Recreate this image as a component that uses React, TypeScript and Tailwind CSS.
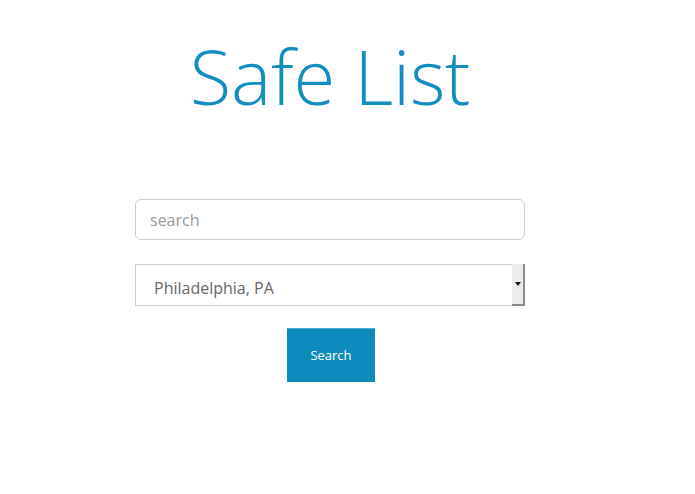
import React from 'react';

const App: React.FC = () => {
  return (
    <div className="min-h-[494px] bg-white font-['Open_Sans',sans-serif]">
      <div className="w-[390px] ml-[135px] pt-[38px] flex flex-col items-center">
        {/* Title */}
        <h1 className="text-[76px] leading-none font-light text-[#128dc0] tracking-[-0.3px]">Safe List</h1>

        {/* Search input */}
        <input
          type="text"
          placeholder="search"
          className="mt-[85px] w-full h-[41px] px-[14px] text-[16px] text-[#555] placeholder:text-[#999] border border-[#ccc] rounded-[6px] outline-none"
        />

        {/* City select */}
        <div className="mt-[24px] w-full h-[42px] flex border border-[#ccc] bg-white">
          <div className="flex-1 flex items-center pl-[18px] pt-[5px] text-[16px] text-[#666]">Philadelphia, PA</div>
          <div className="w-[13px] -my-px -mr-px flex items-center justify-center bg-[#ececec] border-r-2 border-b-2 border-[#8a8a8a]">
            <svg width="6" height="4" viewBox="0 0 6 4">
              <path d="M0 0h6L3 4z" fill="#111" />
            </svg>
          </div>
        </div>

        {/* Submit */}
        <button className="mt-[22px] ml-[2px] w-[88px] h-[54px] bg-[#0b8cbd] border-t border-[#4fb0d6] text-white text-[13px]">
          Search
        </button>
      </div>
    </div>
  );
};

export default App;
